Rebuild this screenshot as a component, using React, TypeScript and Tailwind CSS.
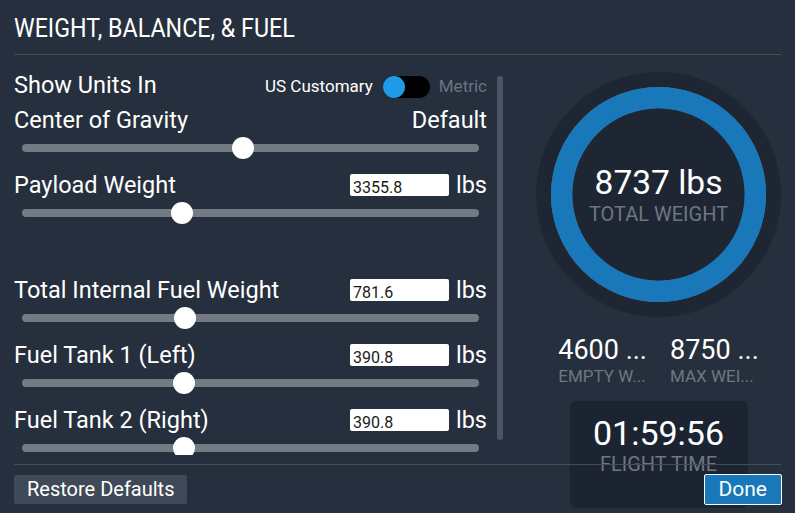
import React from 'react'

type Field = { label: string; value: string; thumb: number }

const fuelFields: Field[] = [
  { label: 'Total Internal Fuel Weight', value: '781.6', thumb: 185 },
  { label: 'Fuel Tank 1 (Left)', value: '390.8', thumb: 184 },
  { label: 'Fuel Tank 2 (Right)', value: '390.8', thumb: 184 },
]

// thumb = centre x of the knob on the page, track starts at x 22
const Slider = ({ thumb, last }: { thumb: number; last?: boolean }) => (
  <div className={`relative mx-[8px] flex h-[26px] items-center ${last ? '' : 'mb-[9px]'}`}>
    <div className="h-[8px] w-full rounded-full bg-[#737a84]" />
    <div
      className="absolute top-[2px] -ml-[11px] h-[22px] w-[22px] rounded-full bg-white"
      style={{ left: thumb - 22 }}
    />
  </div>
)

const ValueRow = ({ label, value }: { label: string; value: string }) => (
  <div className="flex h-[30px] items-center justify-between">
    <span className="pt-[2px] text-[23.5px] text-white">{label}</span>
    <div className="flex items-center gap-[7px]">
      <div className="h-[22px] w-[99px] overflow-hidden rounded-[2px] bg-white px-[3px] text-[16px] leading-[28px] text-[#1b1b1b]">
        {value}
      </div>
      <span className="pt-[1px] text-[23.5px] text-white">lbs</span>
    </div>
  </div>
)

const WeightRing = () => {
  const r = 96.75
  const c = 2 * Math.PI * r
  const pct = 8737 / 8750
  return (
    <div className="relative h-[245px] w-[245px]">
      <svg width="245" height="245" viewBox="0 0 245 245">
        <circle cx="122.5" cy="122.5" r="122.5" fill="#1f2633" />
        <circle cx="122.5" cy="122.5" r={r} fill="none" stroke="#6b7380" strokeWidth="21.5" />
        <circle
          cx="122.5"
          cy="122.5"
          r={r}
          fill="none"
          stroke="#1878b9"
          strokeWidth="21.5"
          strokeDasharray={`${c * pct} ${c}`}
          transform="rotate(-90 122.5 122.5)"
        />
        <circle cx="122.5" cy="122.5" r="86" fill="#1e2634" />
      </svg>
      <div className="absolute inset-0 flex flex-col items-center justify-center">
        <span className="text-[33.5px] leading-[38px] text-white">8737 lbs</span>
        <span className="text-[20px] leading-[24px] text-[#6e7682]">TOTAL WEIGHT</span>
      </div>
    </div>
  )
}

export default function App() {
  return (
    <div className="flex h-[513px] w-[795px] flex-col overflow-hidden bg-[#262f3d] font-['Roboto',sans-serif] text-white">
      {/* header */}
      <div className="mx-[14px] h-[55px] border-b border-[#444d5a] pt-[14px]">
        <h1 className="inline-block origin-left scale-x-[0.93] whitespace-nowrap text-[25px] leading-[30px] font-normal">
          WEIGHT, BALANCE, &amp; FUEL
        </h1>
      </div>

      {/* body */}
      <div className="flex h-[409px] px-[14px]">
        <div className="mt-[15px] mb-[9px] w-[473px] overflow-hidden">
          <div className="flex h-[30px] items-center justify-between">
            <span className="pt-[2px] text-[23.5px]">Show Units In</span>
            <div className="mt-[4px] flex items-center">
              <span className="text-[17px]">US Customary</span>
              <div className="ml-[10px] flex h-[22px] w-[47px] rounded-full bg-black">
                <div className="h-[22px] w-[22px] rounded-full bg-[#1f9bea]" />
              </div>
              <span className="ml-[9px] text-[17px] text-[#6b7380]">Metric</span>
            </div>
          </div>
          <div className="mt-[5px] flex h-[30px] items-center justify-between">
            <span className="pt-[2px] text-[23.5px]">Center of Gravity</span>
            <span className="pt-[2px] text-[23.5px]">Default</span>
          </div>
          <Slider thumb={243} />

          <ValueRow label="Payload Weight" value="3355.8" />
          <Slider thumb={182} />

          <div className="h-[40px]" />

          {fuelFields.map((f, i) => (
            <div key={f.label}>
              <ValueRow label={f.label} value={f.value} />
              <Slider thumb={f.thumb} last={i === fuelFields.length - 1} />
            </div>
          ))}
        </div>

        {/* scrollbar */}
        <div className="ml-[10px] mt-[21px] h-[364px] w-[6px] rounded-full bg-[#4b5462]" />

        {/* right column */}
        <div className="ml-[33px] flex w-[245px] flex-col items-center pt-[17px]">
          <WeightRing />
          <div className="mt-[18px] flex gap-[23px]">
            <div className="flex flex-col items-start">
              <span className="text-[27px] leading-[30px]">4600 ...</span>
              <span className="text-[17px] leading-[22px] text-[#6e7682]">EMPTY W...</span>
            </div>
            <div className="flex flex-col items-start">
              <span className="text-[27px] leading-[30px]">8750 ...</span>
              <span className="text-[17px] leading-[22px] text-[#6e7682]">MAX WEI...</span>
            </div>
          </div>
          <div className="mt-[14px] flex h-[107px] w-[178px] shrink-0 flex-col items-center rounded-[6px] bg-[#1d2431] pt-[13px]">
            <span className="text-[34px] leading-[38px]">01:59:56</span>
            <span className="text-[20px] leading-[24px] text-[#6e7682]">FLIGHT TIME</span>
          </div>
        </div>
      </div>

      {/* footer */}
      <div className="relative mx-[14px] flex flex-1 items-center justify-between border-t border-[#444d5a]">
        <button className="h-[29px] rounded-[2px] bg-[#3f4957] px-[13px] text-[20px] leading-[29px] text-white">
          Restore Defaults
        </button>
        <button className="-mr-[1px] h-[31px] rounded-[2px] border border-white bg-[#1878b9] px-[14px] text-[21px] leading-[29px] text-white">
          Done
        </button>
      </div>
    </div>
  )
}
